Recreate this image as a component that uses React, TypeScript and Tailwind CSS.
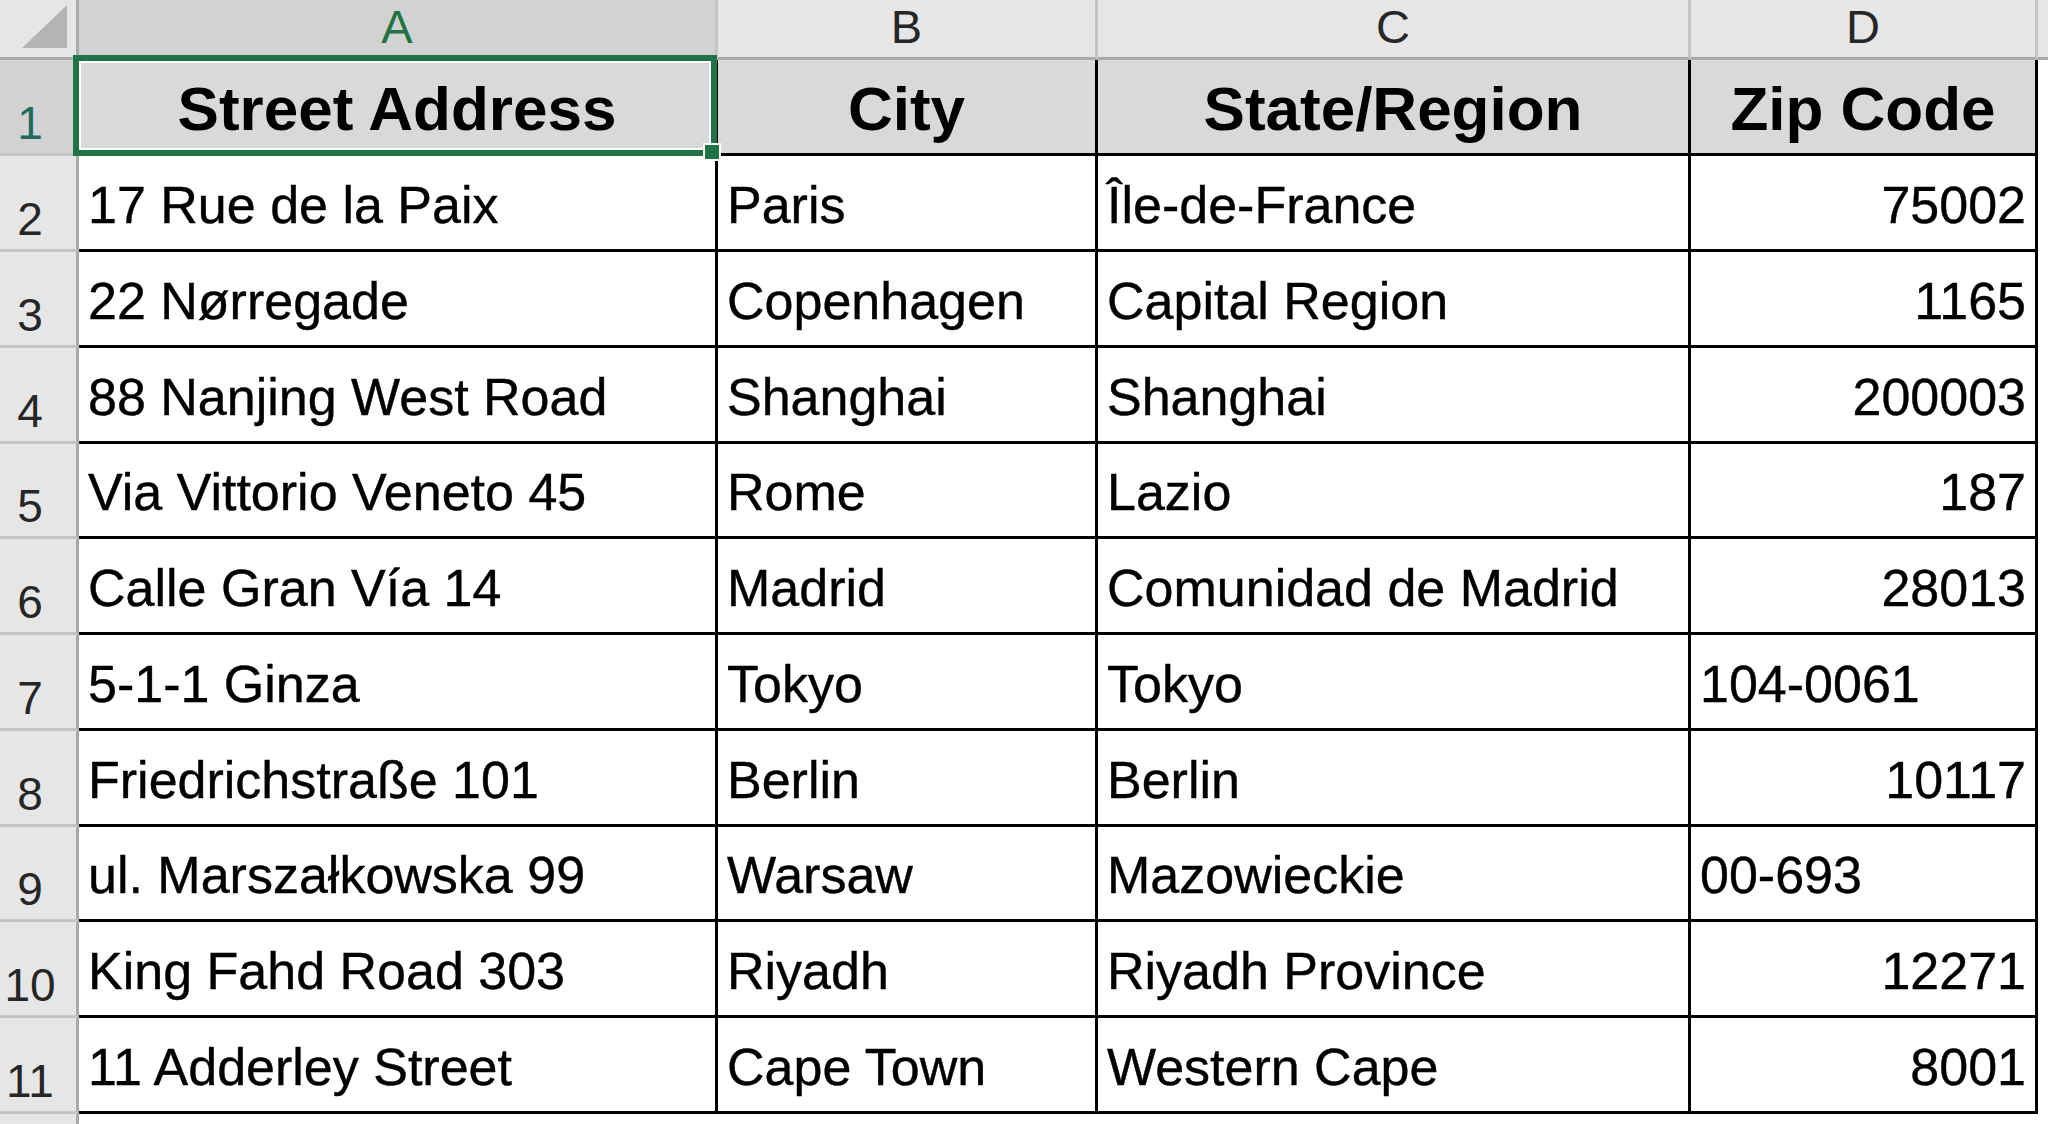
import React from "react";

const rows: [string, string, string, string, boolean][] = [
  ["17 Rue de la Paix", "Paris", "Île-de-France", "75002", true],
  ["22 Nørregade", "Copenhagen", "Capital Region", "1165", true],
  ["88 Nanjing West Road", "Shanghai", "Shanghai", "200003", true],
  ["Via Vittorio Veneto 45", "Rome", "Lazio", "187", true],
  ["Calle Gran Vía 14", "Madrid", "Comunidad de Madrid", "28013", true],
  ["5-1-1 Ginza", "Tokyo", "Tokyo", "104-0061", false],
  ["Friedrichstraße 101", "Berlin", "Berlin", "10117", true],
  ["ul. Marszałkowska 99", "Warsaw", "Mazowieckie", "00-693", false],
  ["King Fahd Road 303", "Riyadh", "Riyadh Province", "12271", true],
  ["11 Adderley Street", "Cape Town", "Western Cape", "8001", true],
];

const font = { fontFamily: '"Liberation Sans", Arial, sans-serif' };

const colHead =
  "flex items-end justify-center border-r-[3px] border-b-[3px] border-r-[#c4c4c4] border-b-[#a9a9a9] pb-[7px] text-[47px] leading-none";
const rowHead =
  "flex items-end justify-center border-r-[3px] border-b-[3px] border-r-[#a9a9a9] border-b-[#c4c4c4] pb-[7px] pr-[16px] text-[46px] leading-none";
const bodyCell =
  "flex items-end overflow-hidden whitespace-nowrap border-r-[3px] border-b-[3px] border-black bg-white pb-[18px] text-[52px] leading-none text-black [-webkit-text-stroke:0.4px_black]";
const headCell =
  "flex items-end justify-center overflow-hidden whitespace-nowrap border-r-[3px] border-b-[3px] border-r-black border-b-black bg-[#d9d9d9] pb-[13px] text-[62px] font-bold leading-none text-black";

export default function App() {
  return (
    <div
      className="grid h-[1124px] w-[2048px] overflow-hidden bg-white grid-cols-[79px_639px_380px_593px_347px_1fr] grid-rows-[60px_96px_96px_96px_96px_95px_96px_96px_96px_95px_96px_96px_1fr]"
      style={font}
    >
      {/* corner */}
      <div className="flex items-start justify-start border-r-[3px] border-b-[3px] border-r-[#a9a9a9] border-b-[#a9a9a9] bg-[#e6e6e6]">
        <svg width="76" height="57" viewBox="0 0 76 57">
          <polygon points="67,5 67,48 22,48" fill="#b4b4b4" />
        </svg>
      </div>
      <div className={`${colHead} bg-[#d2d2d2] text-[#217346]`}>A</div>
      <div className={`${colHead} bg-[#e6e6e6] text-[#262626]`}>B</div>
      <div className={`${colHead} bg-[#e6e6e6] text-[#262626]`}>C</div>
      <div className={`${colHead} bg-[#e6e6e6] text-[#262626]`}>D</div>
      <div className="border-b-[3px] border-b-[#a9a9a9] bg-[#e6e6e6]" />

      {/* row 1 */}
      <div className={`${rowHead} bg-[#d2d2d2] text-[#1e6b5e]`}>1</div>
      <div className={`${headCell} relative overflow-visible`}>
        Street Address
        <div className="pointer-events-none absolute -left-[6px] -top-[5px] -right-[2px] -bottom-[3px] z-10 border-[6px] border-[#217346]">
          <div className="h-full w-full border-2 border-white" />
        </div>
        <div className="absolute -right-[6px] -bottom-[8px] z-20 h-[18px] w-[18px] border-2 border-white bg-[#217346]" />
      </div>
      <div className={headCell}>City</div>
      <div className={headCell}>State/Region</div>
      <div className={headCell}>Zip Code</div>
      <div className="bg-white" />

      {rows.map((r, i) => (
        <React.Fragment key={i}>
          <div className={`${rowHead} bg-[#e6e6e6] text-[#262626]`}>{i + 2}</div>
          <div className={`${bodyCell} pl-[9px]`}>{r[0]}</div>
          <div className={`${bodyCell} pl-[9px]`}>{r[1]}</div>
          <div className={`${bodyCell} pl-[9px]`}>{r[2]}</div>
          {r[4] ? (
            <div className={`${bodyCell} justify-end pr-[9px]`}>{r[3]}</div>
          ) : (
            <div className={`${bodyCell} pl-[9px]`}>{r[3]}</div>
          )}
          <div className="bg-white" />
        </React.Fragment>
      ))}

      {/* row 12 (partial) */}
      <div className="border-r-[3px] border-r-[#a9a9a9] bg-[#e6e6e6]" />
      <div className="bg-white" />
      <div className="bg-white" />
      <div className="bg-white" />
      <div className="bg-white" />
      <div className="bg-white" />
    </div>
  );
}
